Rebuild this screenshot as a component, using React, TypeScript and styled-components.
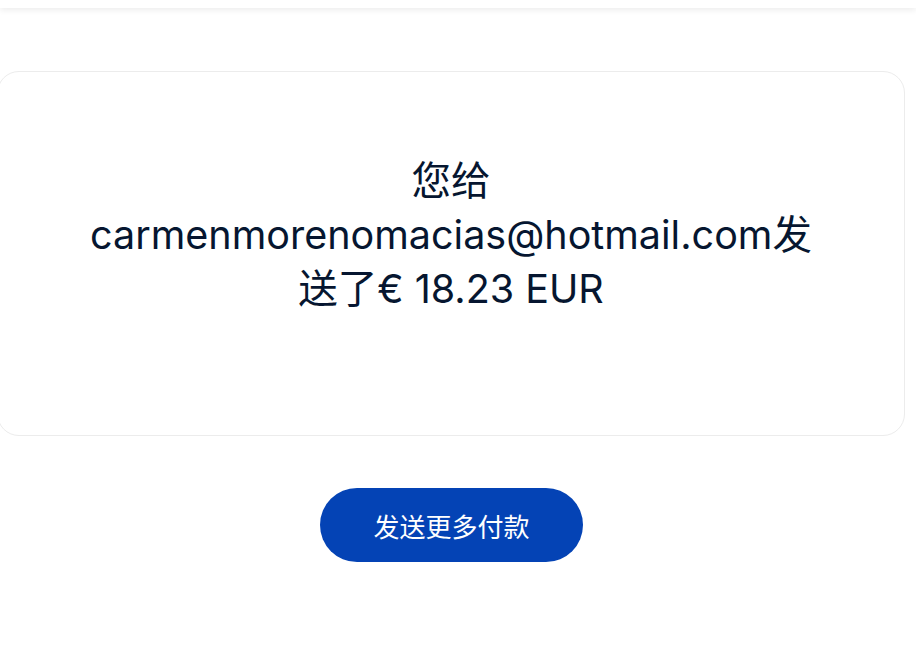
import styled, { createGlobalStyle } from "styled-components";

const GlobalStyle = createGlobalStyle`
  html, body {
    margin: 0;
    padding: 0;
    background: #fff;
    overflow: hidden;
  }
  body {
    font-family: Inter, "Noto Sans CJK SC", sans-serif;
  }
`;

const Page = styled.div`
  width: 903px;
  height: 652px;
  display: flex;
  flex-direction: column;
  align-items: center;
`;

const TopBar = styled.header`
  align-self: stretch;
  width: 916px;
  height: 8px;
  background: #fff;
  box-shadow: 0 2px 6px rgba(0, 0, 0, 0.08);
  flex-shrink: 0;
`;

const Card = styled.section`
  box-sizing: border-box;
  margin: 63px 0 0 -3px;
  align-self: flex-start;
  width: 908px;
  height: 365px;
  border: 1px solid #ececec;
  border-radius: 22px;
  background: #fff;
  display: flex;
  justify-content: center;
  padding: 82px 40px 0;
`;

const Message = styled.h1`
  margin: 0;
  font-family: Inter, "Noto Sans CJK SC", sans-serif;
  font-weight: 400;
  font-size: 39.5px;
  line-height: 54px;
  color: #061630;
  text-align: center;
  word-break: break-all;
`;

const PrimaryButton = styled.button`
  margin-top: 52px;
  width: 263px;
  height: 74px;
  border: none;
  border-radius: 37px;
  background: #0443b5;
  color: #fff;
  font-family: Inter, "Noto Sans CJK SC", sans-serif;
  font-size: 26px;
  cursor: pointer;
`;

export default function App() {
  return (
    <>
      <GlobalStyle />
      <Page>
        <TopBar />
        <Card>
          <Message>
            您给
            <br />
            carmenmorenomacias@hotmail.com发
            <br />
            送了€ 18.23 EUR
          </Message>
        </Card>
        <PrimaryButton>发送更多付款</PrimaryButton>
      </Page>
    </>
  );
}
